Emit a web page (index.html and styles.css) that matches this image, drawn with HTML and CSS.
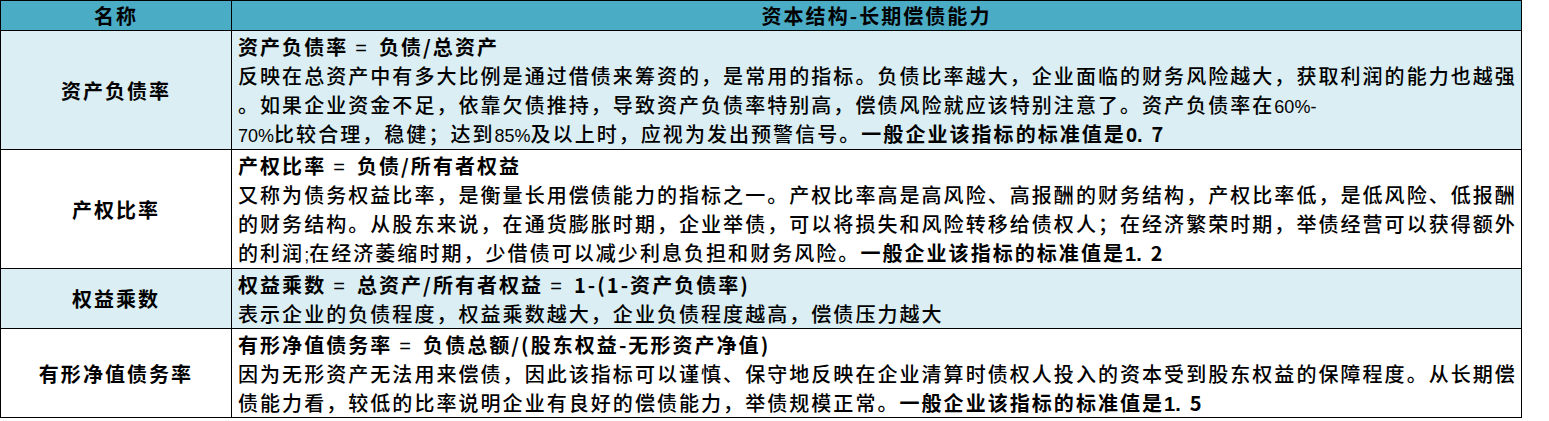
FILE: index.html
```html
<!DOCTYPE html>
<html lang="zh-CN">
<head>
<meta charset="utf-8">
<title>资本结构-长期偿债能力</title>
<link rel="stylesheet" href="styles.css">
</head>
<body>
<table class="sheet">
  <colgroup><col class="c-name"><col class="c-desc"></colgroup>
  <thead>
    <tr class="head">
      <th>名称</th>
      <th>资本结构-长期偿债能力</th>
    </tr>
  </thead>
  <tbody>
    <tr class="tint r4">
      <td class="name">资产负债率</td>
      <td class="desc">
        <div class="ln b">资产负债率<span class="eq">=</span>负债/总资产</div>
        <div class="ln">反映在总资产中有多大比例是通过借债来筹资的，是常用的指标。负债比率越大，企业面临的财务风险越大，获取利润的能力也越强</div>
        <div class="ln">。如果企业资金不足，依靠欠债推持，导致资产负债率特别高，偿债风险就应该特别注意了。资产负债率在<span class="n">60%-</span></div>
        <div class="ln"><span class="n">70%</span>比较合理，稳健；达到<span class="n">85%</span>及以上时，应视为发出预警信号。<b>一般企业该指标的标准值是<span class="nb">0.</span>7</b></div>
      </td>
    </tr>
    <tr class="r4">
      <td class="name">产权比率</td>
      <td class="desc">
        <div class="ln b">产权比率<span class="eq">=</span>负债/所有者权益</div>
        <div class="ln">又称为债务权益比率，是衡量长用偿债能力的指标之一。产权比率高是高风险、高报酬的财务结构，产权比率低，是低风险、低报酬</div>
        <div class="ln">的财务结构。从股东来说，在通货膨胀时期，企业举债，可以将损失和风险转移给债权人；在经济繁荣时期，举债经营可以获得额外</div>
        <div class="ln">的利润<span class="n">;</span>在经济萎缩时期，少借债可以减少利息负担和财务风险。<b>一般企业该指标的标准值是<span class="nb">1.</span>2</b></div>
      </td>
    </tr>
    <tr class="tint r2">
      <td class="name">权益乘数</td>
      <td class="desc">
        <div class="ln b">权益乘数<span class="eq">=</span>总资产/所有者权益<span class="eq">=</span>1-(1-资产负债率)</div>
        <div class="ln">表示企业的负债程度，权益乘数越大，企业负债程度越高，偿债压力越大</div>
      </td>
    </tr>
    <tr class="r3">
      <td class="name">有形净值债务率</td>
      <td class="desc">
        <div class="ln b">有形净值债务率<span class="eq">=</span>负债总额/(股东权益-无形资产净值)</div>
        <div class="ln">因为无形资产无法用来偿债，因此该指标可以谨慎、保守地反映在企业清算时债权人投入的资本受到股东权益的保障程度。从长期偿</div>
        <div class="ln">债能力看，较低的比率说明企业有良好的偿债能力，举债规模正常。<b>一般企业该指标的标准值是<span class="nb">1.</span>5</b></div>
      </td>
    </tr>
  </tbody>
</table>
</body>
</html>
```

FILE: styles.css
```css
html, body {
  margin: 0;
  padding: 0;
  background: #ffffff;
}

body {
  font-family: "Noto Sans CJK SC", "Noto Sans", sans-serif;
  color: #000000;
}

.sheet {
  border-collapse: collapse;
  table-layout: fixed;
  width: 1522px;
  font-size: 20px;
  letter-spacing: 2.05px;
}

.c-name { width: 231px; }

.sheet th,
.sheet td {
  border: 1px solid #000000;
  padding: 0;
}

.head th {
  background: #4bacc6;
  height: 29px;
  line-height: 29px;
  font-weight: 700;
  text-align: center;
  vertical-align: middle;
}

.tint td { background: #daeef3; }

.name {
  font-weight: 700;
  text-align: center;
  vertical-align: middle;
}

.desc {
  vertical-align: middle;
  padding-left: 6px !important;
  font-weight: 500;
}

.r4 td { height: 118px; }
.r2 td { height: 59px; }
.r3 td { height: 88px; }

.ln {
  white-space: nowrap;
  height: 29px;
  line-height: 29px;
  overflow: visible;
}

.b,
.desc b {
  font-weight: 700;
}

.eq {
  font-family: "Liberation Sans", sans-serif;
  font-weight: 400;
  margin: 0 10px 0 7px;
}

.n {
  font-family: "Liberation Sans", sans-serif;
  font-size: 18px;
  letter-spacing: 0;
  line-height: 1;
}

.nb {
  font-family: "Liberation Sans", sans-serif;
  letter-spacing: 0;
  margin-right: 9px;
  line-height: 1;
}

.desc b {
  font-family: "Noto Sans CJK SC", sans-serif;
}
```
